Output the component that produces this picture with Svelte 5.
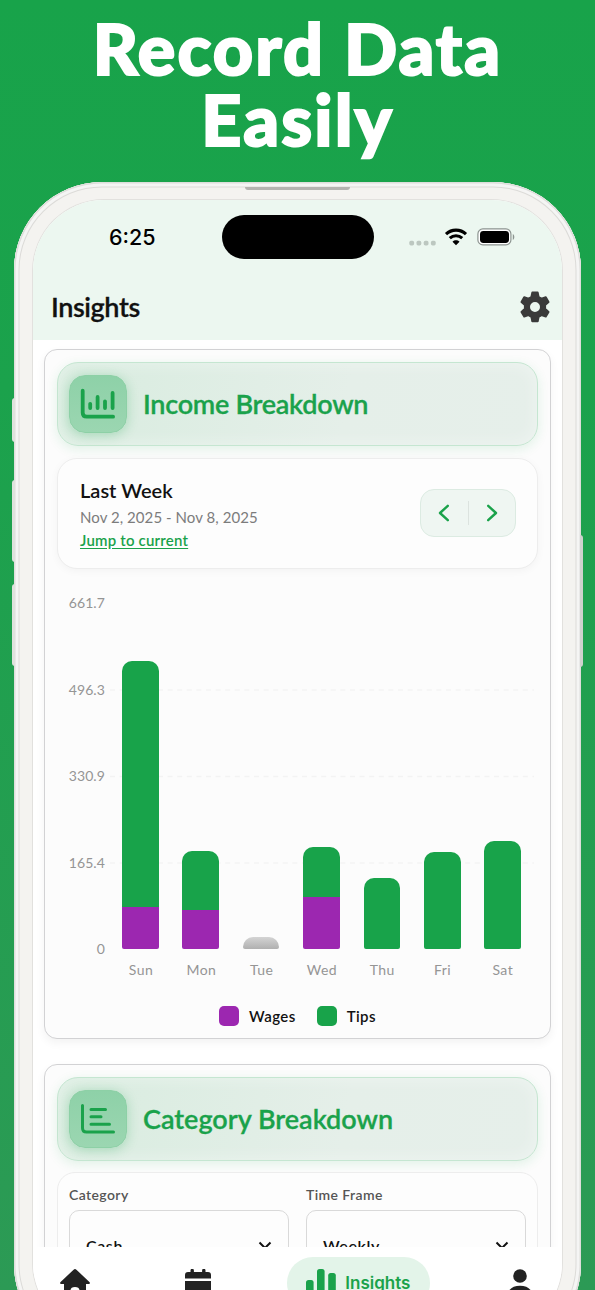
<script>
  const maxValue = 661.7;
  const ticks = ['661.7', '496.3', '330.9', '165.4', '0'];

  const days = [
    { name: 'Sun', wages: 80.5, tips: 470.5 },
    { name: 'Mon', wages: 74, tips: 113.5 },
    { name: 'Tue', wages: 0, tips: 0 },
    { name: 'Wed', wages: 100, tips: 95.5 },
    { name: 'Thu', wages: 0, tips: 136 },
    { name: 'Fri', wages: 0, tips: 186 },
    { name: 'Sat', wages: 0, tips: 206.5 }
  ];

  const percent = (value) => (value / maxValue) * 100;
</script>

<div class="page">
  <h1 class="headline">Record Data<br>Easily</h1>

  <div class="phone">
    <i class="key key--action"></i>
    <i class="key key--up"></i>
    <i class="key key--down"></i>
    <i class="key key--power"></i>
    <i class="speaker"></i>

    <div class="screen">
      <header class="top">
        <div class="status">
          <span class="status__time">6:25</span>
          <span class="status__island"></span>
          <div class="status__icons">
            <svg class="signal" width="28" height="6" viewBox="0 0 28 6">
              <g fill="#bcc7c0">
                <rect x="0.3" y="0.8" width="4.8" height="4.6" rx="1.6" />
                <rect x="7.5" y="0.8" width="4.8" height="4.6" rx="1.6" />
                <rect x="14.7" y="0.8" width="4.8" height="4.6" rx="1.6" />
                <rect x="21.9" y="0.8" width="4.8" height="4.6" rx="1.6" />
              </g>
            </svg>
            <svg class="wifi" width="24" height="18" viewBox="0 0 24 18">
              <path d="M2 6.2C7.6 .8 16.4 .8 22 6.2M5.8 10.2c3.6-3.3 8.8-3.3 12.4 0" fill="none" stroke="#000" stroke-width="3.1" />
              <path d="M12 17.2l-3.5-3.5c2-1.9 5-1.9 7 0z" />
            </svg>
            <svg class="battery" width="38" height="18" viewBox="0 0 38 18">
              <rect x=".9" y=".9" width="33" height="16" rx="5" fill="#fff" stroke="#8c9490" stroke-width="1.2" />
              <rect x="3" y="3" width="29" height="12" rx="3.4" />
              <path d="M35.8 6v6c2-.7 2-5.3 0-6z" fill="#8c9490" />
            </svg>
          </div>
        </div>
        <div class="title">
          <h2 class="title__text">Insights</h2>
          <svg width="32" height="32" viewBox="0 0 32 32">
            <path
              fill="#3a3a3a" stroke="#3a3a3a" stroke-width="2" stroke-linejoin="round" fill-rule="evenodd"
              d="M13.3 1.6h5.4l.9 4.4 2.9 1.7 4.3-1.4 2.7 4.6-3.4 3.1v3.8l3.4 3.1-2.7 4.6-4.3-1.4-2.9 1.7-.9 4.4h-5.4l-.9-4.4-2.9-1.7-4.3 1.4-2.7-4.6 3.4-3.1V14l-3.4-3.1 2.7-4.6 4.3 1.4L12.400 6zM16 10a6 6 0 1 0 0 12 6 6 0 0 0 0-12z"
            />
          </svg>
        </div>
      </header>

      <main class="content">
        <section class="card">
          <div class="banner">
            <span class="banner__icon">
              <svg width="36" height="32" viewBox="0 0 36 32" fill="none" stroke="#1aa24b" stroke-width="3.8" stroke-linecap="round" stroke-linejoin="round">
                <path d="M2.700 2.700v22q0 4 4 4h26.400M10.200 15.800v4.300M17.600 9v11.100M25 13.300v6.800M32.600 5v15.100" />
              </svg>
            </span>
            <h3 class="banner__title banner__title--income">Income Breakdown</h3>
          </div>

          <div class="period">
            <div class="period__info">
              <strong class="period__name">Last Week</strong>
              <span class="period__dates">Nov 2, 2025 - Nov 8, 2025</span>
              <a class="period__link" href="#current">Jump to current</a>
            </div>
            <div class="pager">
              <svg width="12" height="18" viewBox="0 0 12 18"><path d="M9.800 1.800L2 9l7.800 7.200" /></svg>
              <i class="pager__line"></i>
              <svg width="12" height="18" viewBox="0 0 12 18"><path d="M2.200 1.800L10 9l-7.800 7.200" /></svg>
            </div>
          </div>

          <div class="chart">
            <div class="chart__ticks">
              {#each ticks as tick}
                <span>{tick}</span>
              {/each}
            </div>
            <div class="chart__body">
              <svg class="chart__grid" width="424" height="346">
                {#each [87, 173.5, 260] as y}
                  <line x1="0" x2="424" y1={y} y2={y} stroke="#f3f3f3" stroke-width="1.5" stroke-dasharray="5 4.600" />
                {/each}
              </svg>
              <div class="chart__bars">
                {#each days as day}
                  {#if day.wages + day.tips > 0}
                    <div class="bar" style="height: {percent(day.wages + day.tips)}%">
                      <div class="bar__tips"></div>
                      <div class="bar__wages" style="height: {(day.wages / (day.wages + day.tips)) * 100}%"></div>
                    </div>
                  {:else}
                    <div class="bar bar--empty"></div>
                  {/if}
                {/each}
              </div>
              <div class="chart__days">
                {#each days as day}
                  <span>{day.name}</span>
                {/each}
              </div>
            </div>
          </div>

          <div class="legend">
            <i class="legend__box legend__box--wages"></i>
            <span class="legend__wages">Wages</span>
            <i class="legend__box"></i>
            <span>Tips</span>
          </div>
        </section>

        <section class="card">
          <div class="banner">
            <span class="banner__icon">
              <svg width="36" height="32" viewBox="0 0 36 32" fill="none" stroke="#1aa24b" stroke-width="3" stroke-linecap="round" stroke-linejoin="round">
                <path d="M2.500 2.500v22.500q0 4 4 4h27M11 6.500h14.500M11 13.800h10M11 21.300h18.500" />
              </svg>
            </span>
            <h3 class="banner__title">Category Breakdown</h3>
          </div>

          <div class="filters">
            <div class="field">
              <span class="field__label">Category</span>
              <div class="field__select">
                <span>Cash</span>
                <svg width="14" height="9" viewBox="0 0 14 9"><path d="M1.500 1.500L7 7l5.500-5.500" /></svg>
              </div>
            </div>
            <div class="field">
              <span class="field__label">Time Frame</span>
              <div class="field__select">
                <span>Weekly</span>
                <svg width="14" height="9" viewBox="0 0 14 9"><path d="M1.500 1.500L7 7l5.500-5.500" /></svg>
              </div>
            </div>
          </div>
        </section>
      </main>

      <nav class="tabs">
        <svg class="tabs__home" width="30" height="30" viewBox="0 0 30 30" fill="#222">
          <path d="M13.600 .7a2 2 0 0 1 2.800 0l13 12.200c1 1 .4 2.100-.8 2.100H26v12a2 2 0 0 1-2 2h-4.500v-7.500q0-3.500-4.500-3.500t-4.500 3.500V29H6a2 2 0 0 1-2-2V15H1.400C.2 15-.4 13.900 .6 12.900z" />
        </svg>
        <svg class="tabs__calendar" width="26" height="30" viewBox="0 0 26 30" fill="#222">
          <path d="M5.500 1.500a1.700 1.700 0 0 1 3.400 0V3h8.200V1.500a1.700 1.700 0 0 1 3.400 0V3H23a3 3 0 0 1 3 3v3.500H0V6a3 3 0 0 1 3-3h2.500zM0 12h26v14a3 3 0 0 1-3 3H3a3 3 0 0 1-3-3z" />
        </svg>
        <div class="tabs__active">
          <svg width="30" height="28" viewBox="0 0 30 28" fill="#1aa24b">
            <rect x="0" y="11" width="7.600" height="17" rx="2.500" />
            <rect x="11" y="0" width="7.600" height="28" rx="2.500" />
            <rect x="22.200" y="4" width="7.600" height="24" rx="2.500" />
          </svg>
          <span>Insights</span>
        </div>
        <svg class="tabs__person" width="26" height="30" viewBox="0 0 26 30" fill="#222">
          <circle cx="13" cy="7" r="6.800" />
          <path d="M0 29c0-8 5-12.300 13-12.300S26 21 26 29z" />
        </svg>
      </nav>
    </div>
  </div>
</div>

<style>
  :global(body) {
    overflow: hidden;
  }

  .page {
    width: 595px;
    height: 1290px;
    overflow: hidden;
    color: #111;
    font-family: Lato, "Open Sans", sans-serif;
    background: linear-gradient(#18a34a 0, #1ba24c 30%, #2c9a55 100%);
  }

  .page * {
    box-sizing: border-box;
  }

  h1, h2, h3 {
    margin: 0;
  }

  .headline {
    height: 182px;
    padding-top: 13px;
    color: #fff;
    font-size: 70px;
    font-weight: 900;
    line-height: 71px;
    letter-spacing: 2.100px;
    text-align: center;
    -webkit-text-stroke: 2px #fff;
  }

  .phone {
    position: relative;
    width: 567px;
    height: 1170px;
    margin-left: 14px;
    padding: 18px 19px;
    border-radius: 88px;
    background: #f4f3f0;
    box-shadow: inset 0 0 0 1.500px #dededb, inset 0 0 0 4.500px #f5f5f4, inset 0 0 0 5.500px #dcdbd8;
  }

  .key {
    position: absolute;
    left: -2px;
    width: 3px;
    border-radius: 3px 0 0 3px;
    background: #dfe2dd;
  }

  .key--action {
    top: 216px;
    height: 44px;
  }

  .key--up {
    top: 298px;
    height: 82px;
  }

  .key--down {
    top: 402px;
    height: 82px;
  }

  .key--power {
    top: 353px;
    left: auto;
    right: -2px;
    height: 132px;
    border-radius: 0 3px 3px 0;
    background: #cfd2ce;
  }

  .speaker {
    position: absolute;
    top: 4.500px;
    left: 231px;
    width: 105px;
    height: 3px;
    border-radius: 0 0 3px 3px;
    background: #b4b3b0;
  }

  .screen {
    display: flex;
    flex-direction: column;
    height: 1134px;
    overflow: hidden;
    border-radius: 71px;
    background: #fff;
    box-shadow: 0 0 0 1px #e2e1de;
  }

  .top {
    flex: none;
    height: 140px;
    background: #ecf7f0;
  }

  .status {
    display: flex;
    align-items: center;
    height: 74px;
  }

  .status__time {
    width: 189px;
    padding-left: 76px;
    color: #000;
    font-family: Inter, sans-serif;
    font-size: 21.500px;
    font-weight: 500;
  }

  .status__island {
    width: 152px;
    height: 44px;
    border-radius: 22px;
    background: #000;
  }

  .status__icons {
    display: flex;
    align-items: center;
    padding-left: 35px;
  }

  .signal {
    margin: 11px 7px 0 0;
  }

  .battery {
    margin-left: 9px;
  }

  .title {
    display: flex;
    align-items: center;
    justify-content: space-between;
    height: 66px;
    padding: 0 11px 0 18px;
  }

  .title__text {
    margin-top: -2px;
    font-size: 27px;
    font-weight: 600;
    letter-spacing: -.4px;
    -webkit-text-stroke: .3px #111;
  }

  .content {
    flex: 1;
    min-height: 0;
    padding: 9px 11px 0;
    overflow: hidden;
    background: #fff;
  }

  .card {
    height: 690px;
    margin-bottom: 25px;
    padding: 12px;
    border: 1.500px solid #d2d2d4;
    border-radius: 13px;
    background: #fcfcfc;
    box-shadow: 0 4px 10px rgba(0, 0, 0, .05);
  }

  .banner {
    display: flex;
    align-items: center;
    height: 84px;
    padding-left: 11px;
    border: 1.500px solid #c5e6d1;
    border-radius: 21px;
    background: linear-gradient(100deg, #d8ecdf, #e5efe9 60%, #e6efea);
    box-shadow: 0 3px 12px rgba(24, 163, 74, .12), inset 0 0 18px rgba(255, 255, 255, .4);
  }

  .banner__icon {
    display: flex;
    align-items: center;
    justify-content: center;
    width: 58px;
    height: 58px;
    border: 1px solid #8dd0a6;
    border-radius: 16px;
    background: linear-gradient(#8ed1a8, #9bd6b1);
    box-shadow: 0 2px 12px rgba(24, 163, 74, .28);
  }

  .banner__title {
    margin: -2px 0 0 16px;
    color: #1aa24b;
    font-size: 27px;
    font-weight: 600;
    -webkit-text-stroke: .3px #1aa24b;
  }

  .banner__title--income {
    letter-spacing: -.27px;
  }

  .period {
    display: flex;
    align-items: center;
    justify-content: space-between;
    height: 111px;
    margin-top: 12px;
    padding: 0 21px 2px 22px;
    border: 1px solid #ededed;
    border-radius: 20px;
    background: #fdfdfd;
    box-shadow: 0 2px 8px rgba(0, 0, 0, .04);
  }

  .period__info {
    display: flex;
    flex-direction: column;
    align-items: flex-start;
    padding-top: 2px;
  }

  .period__name {
    font-size: 20px;
    font-weight: 600;
    line-height: 27px;
  }

  .period__dates {
    color: #7c7c7c;
    font-size: 15px;
    line-height: 26px;
    letter-spacing: .06px;
  }

  .period__link {
    color: #1aa24b;
    font-size: 15px;
    font-weight: 600;
    line-height: 20px;
    letter-spacing: .2px;
    text-underline-offset: 2px;
  }

  .pager {
    display: flex;
    align-items: center;
    justify-content: space-between;
    width: 96px;
    height: 48px;
    padding: 0 17px;
    border: 1px solid #dcebe2;
    border-radius: 14px;
    background: #eff6f2;
  }

  .pager path {
    fill: none;
    stroke: #1aa24b;
    stroke-width: 2.400;
    stroke-linecap: round;
    stroke-linejoin: round;
  }

  .pager__line {
    width: 1px;
    height: 24px;
    background: #dce3df;
  }

  .chart {
    display: flex;
    height: 402px;
    margin-top: 34px;
  }

  .chart__ticks {
    display: flex;
    flex-direction: column;
    justify-content: space-between;
    width: 48px;
    height: 364px;
    margin-top: -8.600px;
    color: #959595;
    font-size: 14px;
    line-height: 18px;
    letter-spacing: .1px;
    text-align: right;
  }

  .chart__body {
    position: relative;
    width: 422px;
    margin-left: 5px;
  }

  .chart__grid {
    position: absolute;
    top: 0;
    left: 0;
  }

  .chart__bars {
    position: relative;
    display: flex;
    align-items: flex-end;
    justify-content: space-between;
    height: 346px;
    padding: 0 11px 0 12px;
  }

  .bar {
    display: flex;
    flex-direction: column;
    width: 36.500px;
    overflow: hidden;
    border-radius: 10px 10px 2px 2px;
  }

  .bar__tips {
    flex: 1;
    background: #18a34a;
  }

  .bar__wages {
    background: #9c27b0;
  }

  .bar--empty {
    height: 12px;
    background: linear-gradient(#d4d4d4, #b0b0b0);
  }

  .chart__days {
    display: flex;
    justify-content: space-between;
    margin: 12px -1px 0 1px;
    color: #959595;
    font-size: 14px;
    line-height: 18px;
    letter-spacing: .5px;
    text-align: center;
  }

  .chart__days span {
    width: 60.300px;
  }

  .legend {
    display: flex;
    align-items: center;
    justify-content: center;
    height: 22px;
    font-size: 15px;
    font-weight: 600;
    letter-spacing: .4px;
  }

  .legend__box {
    width: 20px;
    height: 20px;
    margin-right: 10px;
    border-radius: 5px;
    background: #18a34a;
  }

  .legend__box--wages {
    background: #9c27b0;
  }

  .legend__wages {
    margin-right: 21px;
  }

  .filters {
    display: flex;
    gap: 17px;
    height: 120px;
    margin-top: 11px;
    padding: 11px;
    border: 1px solid #ededed;
    border-radius: 18px;
    background: #fdfdfd;
  }

  .field {
    width: 220px;
  }

  .field__label {
    display: block;
    height: 26px;
    color: #555;
    font-size: 14px;
    font-weight: 600;
    line-height: 21px;
    letter-spacing: .4px;
  }

  .field__select {
    display: flex;
    align-items: center;
    justify-content: space-between;
    height: 71px;
    padding: 0 16px;
    border: 1px solid #d9d9d9;
    border-radius: 10px;
    font-size: 16px;
    font-weight: 600;
    letter-spacing: .6px;
  }

  .field__select path {
    fill: none;
    stroke: #111;
    stroke-width: 2;
  }

  .tabs {
    display: flex;
    flex: none;
    align-items: flex-start;
    justify-content: space-between;
    height: 87px;
    padding: 10px 29px 0 27px;
    background: #fff;
  }

  .tabs__home,
  .tabs__calendar,
  .tabs__person {
    margin-top: 12px;
  }

  .tabs__calendar {
    margin-left: 18px;
  }

  .tabs__active {
    display: flex;
    align-items: center;
    width: 143px;
    height: 52px;
    padding-left: 19px;
    border-radius: 26px;
    color: #1aa24b;
    font-family: Inter, sans-serif;
    font-size: 17px;
    font-weight: 600;
    background: #e3f4e9;
  }

  .tabs__active span {
    margin-left: 9px;
  }
</style>
